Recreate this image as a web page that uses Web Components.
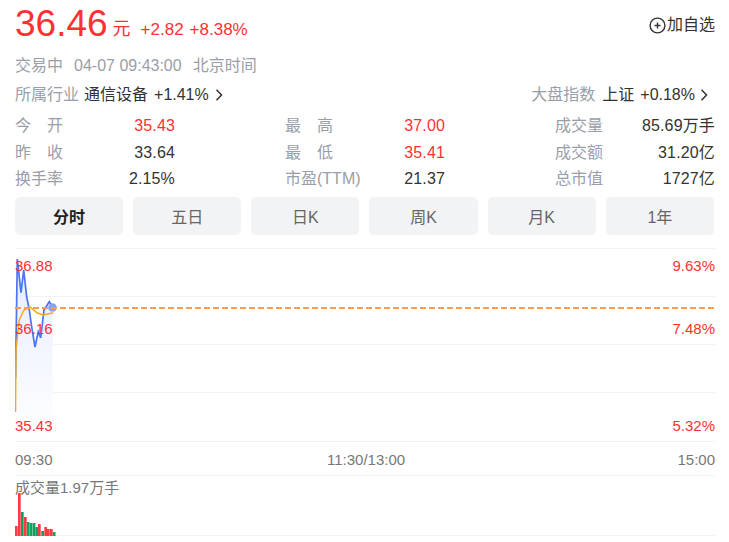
<!DOCTYPE html>
<html lang="zh"><head><meta charset="utf-8"><style>
html,body{margin:0;padding:0;background:#fff}
body{font-family:"Liberation Sans","Noto Sans CJK SC",sans-serif;color:#333}
</style></head><body>
<stock-panel>
  <price-head slot="head"></price-head>
  <meta-row></meta-row>
  <sector-row></sector-row>
  <stat-grid>
    <stat-cell label="今　开" value="35.43" tone="up"></stat-cell>
    <stat-cell label="最　高" value="37.00" tone="up"></stat-cell>
    <stat-cell label="成交量" value="85.69万手"></stat-cell>
    <stat-cell label="昨　收" value="33.64"></stat-cell>
    <stat-cell label="最　低" value="35.41" tone="up"></stat-cell>
    <stat-cell label="成交额" value="31.20亿"></stat-cell>
    <stat-cell label="换手率" value="2.15%"></stat-cell>
    <stat-cell label="市盈(TTM)" value="21.37"></stat-cell>
    <stat-cell label="总市值" value="1727亿"></stat-cell>
  </stat-grid>
  <tab-bar>
    <tab-item active>分时</tab-item><tab-item>五日</tab-item><tab-item>日K</tab-item><tab-item>周K</tab-item><tab-item>月K</tab-item><tab-item>1年</tab-item>
  </tab-bar>
  <time-chart></time-chart>
</stock-panel>
<script>
const F='"Liberation Sans","Noto Sans CJK SC",sans-serif';
function def(name,html){customElements.define(name,class extends HTMLElement{connectedCallback(){if(this.shadowRoot)return;const s=this.attachShadow({mode:'open'});s.innerHTML=typeof html==='function'?html(this):html;}});}
def('stock-panel',`<style>:host{display:block;width:700px;padding:0 14px 0 15px;font-family:${F}}</style><slot name="head"></slot><slot></slot>`);
def('price-head',`<style>:host{display:flex;align-items:flex-start;height:47px;color:#ff3033}
.p{font-size:37px;line-height:46px;margin-top:1px}.u{font-size:18px;line-height:22px;margin:18px 0 0 5px}
.c{font-size:17px;line-height:20px;margin:20px 0 0 10px;display:flex;gap:6px}
.add{margin-left:auto;display:flex;align-items:center;color:#333;font-size:16px;line-height:20px;margin-top:15px}
svg{display:block;margin-right:1px}</style>
<span class="p">36.46</span><span class="u">元</span><span class="c"><span>+2.82</span><span>+8.38%</span></span>
<span class="add"><svg width="17" height="17" viewBox="0 0 17 17" fill="none" stroke="#333"><circle cx="8.5" cy="8.5" r="7.4" stroke-width="1.4"/><path d="M5.5 8.5h6M8.5 5.5v6" stroke-width="1.4"/></svg>加自选</span>`);
def('meta-row',`<style>:host{display:flex;gap:11px;height:20px;margin-top:9px;font-size:16px;line-height:20px;color:#9a9ea8}span{white-space:pre}</style><span>交易中</span><span>04-07 09:43:00</span><span>北京时间</span>`);
const chev=`<svg width="8" height="12" viewBox="0 0 8 12" fill="none" stroke="#333" stroke-width="1.5"><path d="M1.5 .8l5 5.2-5 5.2"/></svg>`;
def('sector-row',`<style>:host{display:flex;justify-content:space-between;height:20px;margin-top:9px;font-size:16px;line-height:20px;color:#9a9ea8}
div{display:flex;align-items:center;gap:5px}b{font-weight:400;color:#333;display:flex;align-items:center;gap:6px}
.r{gap:7px;margin-right:8px}.r svg{margin-left:-1px;margin-right:-1px}</style>
<div>所属行业<b><span>通信设备</span><span>+1.41%</span>${chev}</b></div><div class="r">大盘指数<b><span>上证</span><span>+0.18%</span>${chev}</b></div>`);
def('stat-grid',`<style>:host{display:grid;grid-template-columns:repeat(3,160px);justify-content:space-between;grid-auto-rows:26.5px;margin-top:8px}</style><slot></slot>`);
def('stat-cell',el=>`<style>:host{display:flex;justify-content:space-between;align-items:baseline;font-size:16px;line-height:26px;color:#9a9ea8;white-space:nowrap}
.v{color:${el.getAttribute('tone')==='up'?'#ff3033':'#333'};letter-spacing:.15px}</style><span>${el.getAttribute('label')}</span><span class="v">${el.getAttribute('value')}</span>`);
def('tab-bar',`<style>:host{display:flex;gap:10px;width:698.9px;margin-top:4.5px}::slotted(*){flex:1}</style><slot></slot>`);
def('tab-item',`<style>:host{display:flex;align-items:center;justify-content:center;height:38px;background:#f2f3f5;border-radius:5px;font-size:16px;color:#666}
:host([active]){font-weight:700;color:#222}</style><slot></slot>`);
const bars=[[15,526,'r'],[18,493,'r'],[21,512,'g'],[24,517,'r'],[26.8,522,'g'],[29.7,523,'g'],[32.7,523,'g'],[35.4,527,'g'],[38,524,'r'],[41.3,531,'g'],[44.3,527,'r'],[47,529,'r'],[50,529,'r'],[52.8,532,'g']];
const line='17.3 259L21 292.7L23.7 270L26.7 297L29.3 310L31.7 327L35 347L38.3 331.7L40.7 338L44 310L49.3 301.7L52.7 307.3';
def('time-chart',`<style>:host{display:block;position:relative;height:294px;margin-top:13px;font-size:15px;line-height:18px;color:#ff3033}
.l{position:absolute;white-space:nowrap}svg{position:absolute;left:0;top:0}
.g{color:#777}</style>
<svg width="700" height="294" viewBox="15 248 700 294" fill="none">
<defs><linearGradient id="a" x1="0" x2="0" y1="0" y2="1"><stop offset="0" stop-color="#e6ecff"/><stop offset="1" stop-color="#fff"/></linearGradient></defs>
<g stroke="#f2f3f5"><path d="M15 248.5h700M15 296.5h700M15 344.5h700M15 392.5h700M15 441.5h700M15 475.5h700M15 535.5h700"/></g>
<path d="M15.5 440V378L${line}V440Z" fill="url(#a)"/>
<path d="M15.5 378L${line}" stroke="#4d74f5" stroke-width="1.7"/>
<path d="M15.5 412L16 350L19.3 320L24 310L30 307L37.3 313L43.3 315L53.3 312.7" stroke="#f7a823" stroke-width="1.5"/>
<circle cx="52.5" cy="307.5" r="4.3" fill="#86a2f2"/>
<path d="M15 308h700" stroke="#ff9b50" stroke-width="1.8" stroke-dasharray="6 3"/>
${bars.map(b=>`<rect x="${b[0]}" y="${b[1]}" width="2.7" height="${536-b[1]}" fill="${b[2]=='r'?'#ff3b41':'#12a05c'}"/>`).join('')}
</svg>
<span class="l" style="left:0;top:9px">36.88</span><span class="l" style="right:0;top:9px">9.63%</span>
<span class="l" style="left:0;top:72px">36.16</span><span class="l" style="right:0;top:72px">7.48%</span>
<span class="l" style="left:0;top:169px">35.43</span><span class="l" style="right:0;top:169px">5.32%</span>
<span class="l g" style="left:0;top:203px">09:30</span><span class="l g" style="left:312px;top:203px">11:30/13:00</span><span class="l g" style="right:0;top:203px">15:00</span>
<span class="l g" style="left:0;top:231px">成交量1.97万手</span>`);
</script>
</body></html>
